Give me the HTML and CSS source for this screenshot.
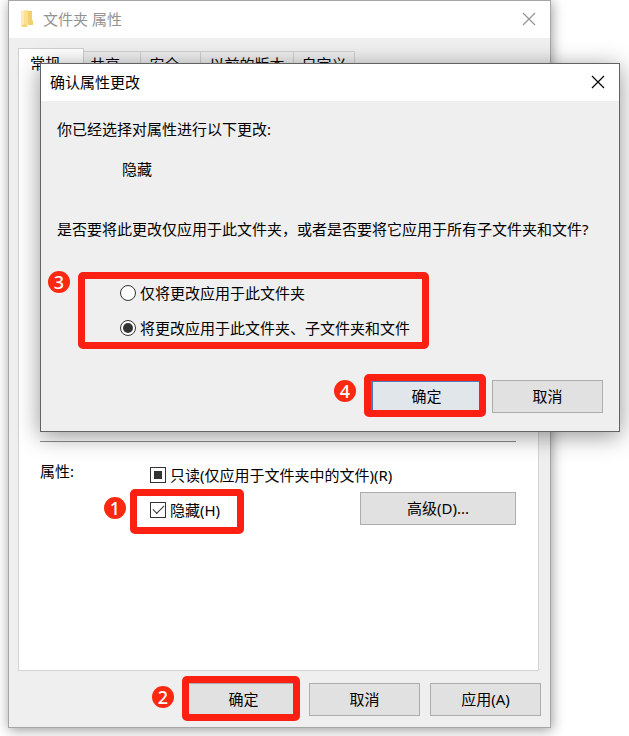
FILE: index.html
```html
<!DOCTYPE html>
<html lang="zh-CN">
<head>
<meta charset="utf-8">
<meta name="viewport" content="width=device-width, initial-scale=1">
<title>文件夹 属性</title>
<link rel="stylesheet" href="styles.css">
</head>
<body>
<main class="desktop">
  <section class="window" aria-label="文件夹 属性">
    <header class="titlebar titlebar-inactive">
      <svg class="folder" viewBox="0 0 12 17" aria-hidden="true">
        <path d="M0 1 L7 0 V15 L0 16 Z" fill="#fbe08f"/>
        <path d="M0 2 L3 1 V15 L0 16 Z" fill="#fdeab4"/>
        <path d="M7 1 H11 V10 L12 11 V15 H7 Z" fill="#f3cf6e"/>
        <path d="M0 15 L5 14 L7 17 L1 17 Z" fill="#f6d67c"/>
      </svg>
      <h1 class="title">文件夹 属性</h1>
      <button class="close" type="button" aria-label="关闭">
        <svg viewBox="0 0 12 12" aria-hidden="true"><path d="M0 0 L12 12 M12 0 L0 12"/></svg>
      </button>
    </header>
    <nav class="tabs">
      <button class="tab tab-active" type="button">常规</button>
      <button class="tab tab-share" type="button">共享</button>
      <button class="tab tab-security" type="button">安全</button>
      <button class="tab tab-versions" type="button">以前的版本</button>
      <button class="tab tab-custom" type="button">自定义</button>
    </nav>
    <div class="panel">
      <hr class="rule">
      <div class="attributes">
        <span>属性:</span>
        <div class="option option-wide">
          <input class="check check-mixed" type="checkbox" id="readonly">
          <label for="readonly">只读(仅应用于文件夹中的文件)(R)</label>
        </div>
        <div class="option marked">
          <input class="check" type="checkbox" id="hidden" checked>
          <label for="hidden">隐藏(H)</label>
          <span class="frame frame-hidden"></span>
          <span class="badge badge-hidden">1</span>
        </div>
        <button class="button button-wide" type="button">高级(D)...</button>
      </div>
    </div>
    <footer class="actions">
      <div class="marked">
        <button class="button" type="button">确定</button>
        <span class="frame frame-apply"></span>
        <span class="badge badge-apply">2</span>
      </div>
      <button class="button" type="button">取消</button>
      <button class="button" type="button">应用(A)</button>
    </footer>
  </section>

  <section class="dialog" role="dialog" aria-label="确认属性更改">
    <header class="titlebar">
      <h2 class="title">确认属性更改</h2>
      <button class="close" type="button" aria-label="关闭">
        <svg viewBox="0 0 12 12" aria-hidden="true"><path d="M0 0 L12 12 M12 0 L0 12"/></svg>
      </button>
    </header>
    <div class="message">
      <p>你已经选择对属性进行以下更改:</p>
      <p class="change">隐藏</p>
      <p class="question">是否要将此更改仅应用于此文件夹，或者是否要将它应用于所有子文件夹和文件?</p>
      <div class="choices marked">
        <div class="option">
          <input class="radio" type="radio" name="scope" id="only">
          <label for="only">仅将更改应用于此文件夹</label>
        </div>
        <div class="option">
          <input class="radio" type="radio" name="scope" id="all" checked>
          <label for="all">将更改应用于此文件夹、子文件夹和文件</label>
        </div>
        <span class="frame frame-choices"></span>
        <span class="badge badge-choices">3</span>
      </div>
    </div>
    <footer class="actions actions-dialog">
      <div class="marked">
        <button class="button button-default" type="button">确定</button>
        <span class="frame frame-confirm"></span>
        <span class="badge badge-confirm">4</span>
      </div>
      <button class="button" type="button">取消</button>
    </footer>
  </section>
</main>
</body>
</html>
```
FILE: styles.css
```css
* {
  box-sizing: border-box;
}

body {
  margin: 0;
  background: #fff;
  color: #000;
  font: 15px/20px "Noto Sans", "Noto Sans CJK SC", sans-serif;
}

h1, h2, p {
  margin: 0;
  font-size: 15px;
  font-weight: 400;
}

button, input {
  margin: 0;
  font: inherit;
  color: inherit;
}

.desktop {
  position: relative;
  padding: 0 78px 8px 8px;
}

.window {
  background: #efefef;
  border: 1px solid #a6a6a6;
  box-shadow: 1px 2px 12px rgba(0, 0, 0, 0.4);
}

/* The confirmation lies over the properties window. */
.dialog {
  position: absolute;
  top: 63px;
  left: 40px;
  right: 9px;
  background: #efefef;
  border: 1px solid #626262;
  box-shadow: 0 4px 22px rgba(0, 0, 0, 0.42);
}

.titlebar {
  display: flex;
  align-items: center;
  height: 37px;
  padding: 0 15px 2px 9px;
  background: #fff;
}

.titlebar-inactive {
  padding-left: 12px;
  color: #939393;
}

.title {
  flex: 1;
}

.folder {
  width: 12px;
  height: 17px;
  margin-right: 10px;
}

.close {
  display: flex;
  padding: 0;
  border: 0;
  background: none;
}

.close svg {
  width: 12px;
  height: 12px;
  overflow: visible;
  fill: none;
  stroke: currentColor;
  stroke-width: 1.2;
}

.tabs {
  display: flex;
  align-items: flex-end;
  height: 38px;
  padding: 0 9px;
}

.tab {
  height: 25px;
  padding: 0;
  border: 1px solid #d0d0d0;
  border-width: 1px 1px 0 0;
  background: #efefef;
}

.tab-active {
  position: relative;
  width: 66px;
  height: 29px;
  margin-bottom: -1px;
  padding-right: 12px;
  border-left-width: 1px;
  background: #fff;
}

.tab-share {
  width: 57px;
  padding-right: 14px;
}

.tab-security {
  width: 60px;
  padding-right: 12px;
}

.tab-versions {
  width: 93px;
}

.tab-custom {
  width: 61px;
}

.panel {
  margin: 0 11px 0 9px;
  padding: 364px 22px 145px 21px;
  border: 1px solid #d4d4d4;
  background: #fff;
}

.rule {
  height: 1px;
  margin: 0 0 19px;
  border: 0;
  background: #8c8c8c;
}

.attributes {
  display: grid;
  grid-template-columns: 110px 1fr auto;
  align-items: center;
  row-gap: 7px;
}

.attributes > :first-child {
  align-self: start;
}

.attributes .option {
  grid-column-start: 2;
  justify-self: start;
  padding-top: 2px;
}

.attributes .option-wide {
  grid-column: 2 / 4;
  padding-top: 4px;
}

.option {
  display: flex;
  align-items: center;
  gap: 4px;
}

.check,
.radio {
  appearance: none;
  display: grid;
  place-content: center;
  width: 16px;
  height: 16px;
  border: 1px solid #333;
  background: #fff;
}

.radio {
  border-radius: 50%;
}

.radio:checked::before {
  content: "";
  width: 10px;
  height: 10px;
  border-radius: 50%;
  background: #333;
}

.check:checked::before {
  content: "";
  width: 10px;
  height: 5px;
  border: solid #333;
  border-width: 0 0 1px 1px;
  transform: translateY(-2px) rotate(-45deg);
}

.check-mixed::before {
  content: "";
  width: 8px;
  height: 8px;
  background: #333;
}

.button {
  display: block;
  width: 111px;
  height: 33px;
  padding: 0 0 2px;
  border: 1px solid #adadad;
  background: #e1e1e1;
}

.button-wide {
  width: 156px;
}

.button-default {
  border: 2px solid #4a7bc0;
  background: #e1e6eb;
}

.actions {
  display: flex;
  justify-content: flex-end;
  gap: 10px;
  padding: 12px 9px 11px;
}

.actions-dialog {
  padding: 0 16px 18px;
}

.message {
  padding: 18px 16px 42px;
}

.change {
  margin-top: 20px;
  padding-left: 65px;
}

.question {
  margin-top: 40px;
}

.choices {
  display: grid;
  gap: 15px;
  margin-top: 44px;
  padding-left: 63px;
}

/* Numbered step markers drawn round the controls. */
.marked {
  position: relative;
}

.frame {
  position: absolute;
  border: 7px solid #fc2012;
  border-radius: 5px;
  pointer-events: none;
}

.frame-confirm {
  inset: -6px -4px -4px -7px;
}

.frame-apply {
  inset: -7px -1px -5px -6px;
}

.frame-hidden {
  inset: -9px -24px -14px -20px;
}

.frame-choices {
  inset: -11px 174px -11px 21px;
}

.badge {
  position: absolute;
  width: 22px;
  height: 22px;
  border-radius: 50%;
  background: #fc2912;
  color: #fff;
  font-size: 18px;
  font-weight: 500;
  line-height: 22px;
  text-align: center;
}

.badge-hidden {
  top: -1px;
  left: -46px;
}

.badge-confirm {
  top: 0;
  left: -37px;
}

.badge-apply {
  top: 3px;
  left: -36px;
}

.badge-choices {
  top: -12px;
  left: -9px;
}
```
